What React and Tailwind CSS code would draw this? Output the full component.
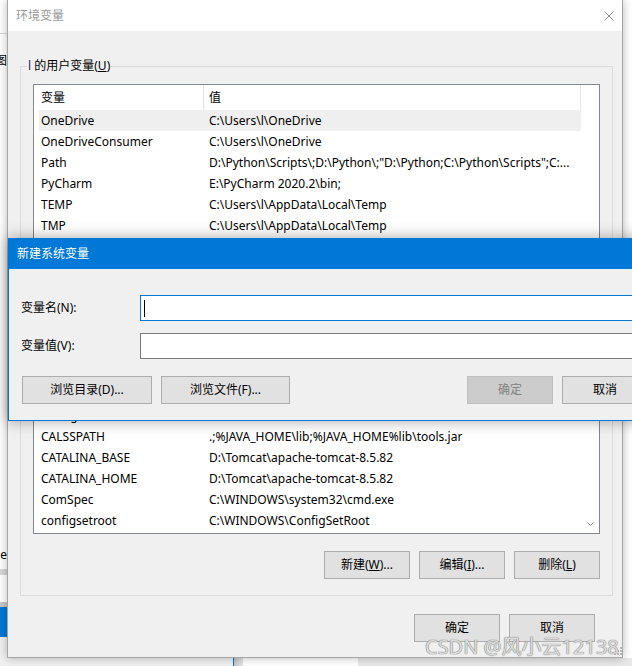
import React from 'react'

const userVars = [
  ['OneDrive', 'C:\\Users\\l\\OneDrive'],
  ['OneDriveConsumer', 'C:\\Users\\l\\OneDrive'],
  ['Path', 'D:\\Python\\Scripts\\;D:\\Python\\;"D:\\Python;C:\\Python\\Scripts";C:...'],
  ['PyCharm', 'E:\\PyCharm 2020.2\\bin;'],
  ['TEMP', 'C:\\Users\\l\\AppData\\Local\\Temp'],
  ['TMP', 'C:\\Users\\l\\AppData\\Local\\Temp'],
]

// first row sits fully under the dialog, so it is left blank
const systemVars = [
  ['', ''],
  ['asl.log', 'Destination=file'],
  ['CALSSPATH', '.;%JAVA_HOME\\lib;%JAVA_HOME%lib\\tools.jar'],
  ['CATALINA_BASE', 'D:\\Tomcat\\apache-tomcat-8.5.82'],
  ['CATALINA_HOME', 'D:\\Tomcat\\apache-tomcat-8.5.82'],
  ['ComSpec', 'C:\\WINDOWS\\system32\\cmd.exe'],
  ['configsetroot', 'C:\\WINDOWS\\ConfigSetRoot'],
  ['DriverData', 'C:\\Windows\\System32\\Drivers\\DriverData'],
]

const Btn = ({ children, className = '', disabled }) => (
  <button
    type="button"
    className={`h-[28px] shrink-0 flex items-center justify-center border leading-none ${
      disabled ? 'bg-[#cccccc] border-[#bfbfbf] text-[#838383]' : 'bg-[#e1e1e1] border-[#adadad] text-black'
    } ${className}`}
  >
    {children}
  </button>
)

// list view with a header, like the Win10 ListView
const VarList = ({ rows, height, selected = -1, arrow }) => (
  <div className={`${height} flex border border-[#828790] bg-white overflow-hidden`}>
    <div className="ml-[5px] w-[542px] shrink-0">
      <div className="flex h-[25px] leading-[25px]">
        <div className="w-[165px] shrink-0 border-r border-[#e5e5e5] pl-[2px]">变量</div>
        <div className="flex-1 border-r border-[#e5e5e5] pl-[5px]">值</div>
      </div>
      {rows.map(([name, value], i) => (
        <div key={i} className={`flex h-[21px] leading-[21px] ${i === selected ? 'bg-[#efefef]' : ''}`}>
          <div className="w-[165px] shrink-0 pl-[2px] whitespace-nowrap overflow-hidden">{name}</div>
          <div className="flex-1 min-w-0 pl-[5px] whitespace-nowrap overflow-hidden">{value}</div>
        </div>
      ))}
    </div>
    <div className="flex-1 flex flex-col justify-end items-center pb-[7px]">
      {arrow && (
        <svg width="7" height="4" viewBox="0 0 7 4">
          <path d="M0.5 0.5 L3.5 3.5 L6.5 0.5" stroke="#8a8a8a" fill="none" />
        </svg>
      )}
    </div>
  </div>
)

const GroupBox = ({ label, children, className = '' }) => (
  <div className={`relative border border-[#dcdcdc] ${className}`}>
    {label && (
      <span className="absolute -top-[9px] left-[6px] bg-[#f0f0f0] px-[1px] leading-[16px] whitespace-nowrap">{label}</span>
    )}
    {children}
  </div>
)

const Backdrop = () => (
  <>
    <div className="absolute left-0 top-0 w-[7px] h-[666px] flex flex-col bg-white">
      <div className="h-[34px] shrink-0 border-b border-[#d9d9d9]" />
      <div className="h-[20px] shrink-0" />
      <div className="h-[14px] shrink-0 w-[7px] overflow-hidden flex justify-end leading-[14px]">
        <span className="shrink-0">图</span>
      </div>
      <div className="flex-1" />
      <div className="h-[14px] shrink-0 w-[7px] overflow-hidden flex justify-end leading-[14px]">
        <span className="shrink-0">e</span>
      </div>
      <div className="h-[7px] shrink-0" />
      <div className="h-[6px] shrink-0 bg-[#d6d6d6]" />
      <div className="h-[27px] shrink-0" />
      <div className="h-[5px] shrink-0 bg-[#c8c8c8]" />
      <div className="h-[30px] shrink-0 bg-[#0078d7]" />
      <div className="h-[29px] shrink-0 bg-[#f0f0f0]" />
    </div>
    <div className="absolute left-0 bottom-0 w-[632px] h-[8px] flex">
      <div className="w-[233px] bg-[#f0f0f0]" />
      <div className="w-[1px] bg-[#0078d7]" />
      <div className="w-[9px] bg-gradient-to-r from-[#c4c4c4] to-[#e6e6e6]" />
      <div className="w-[115px] bg-white" />
      <div className="flex-1 bg-[#e8e8e8]" />
    </div>
  </>
)

const EnvWindow = () => (
  <div className="absolute left-[7px] top-0 w-[616px] h-[658px] flex flex-col bg-[#f0f0f0] border-x border-b border-[#a6a6a6] shadow-[0_0_9px_rgba(0,0,0,0.28)]">
    <div className="h-[31px] shrink-0 flex items-center justify-between bg-white pl-[8px] pr-[8px] text-[#999999]">
      <span>环境变量</span>
      <svg width="10" height="10" viewBox="0 0 10 10">
        <path d="M0.5 0.5 L9.5 9.5 M9.5 0.5 L0.5 9.5" stroke="#8f8f8f" strokeWidth="1" fill="none" />
      </svg>
    </div>
    <div className="pl-[12px]">
      <GroupBox
        className="mt-[35px] w-[593px] pt-[17px] px-[12px] pb-[16px]"
        label={
          <>
            <span className="text-[#3a1c4a]">l</span> 的用户变量(<u>U</u>)
          </>
        }
      >
        <VarList rows={userVars} height="h-[179px]" selected={0} />
        {/* button row covered by the dialog */}
        <div className="mt-[17px] h-[28px]" />
      </GroupBox>
      <GroupBox className="mt-[15px] w-[593px] pt-[17px] px-[12px] pb-[16px]">
        <VarList rows={systemVars} height="h-[176px]" arrow />
        <div className="mt-[17px] flex justify-end gap-[9px]">
          <Btn className="w-[86px]">
            新建(<u>W</u>)...
          </Btn>
          <Btn className="w-[86px]">
            编辑(<u>I</u>)...
          </Btn>
          <Btn className="w-[86px]">
            删除(<u>L</u>)
          </Btn>
        </div>
      </GroupBox>
      <div className="mt-[18px] flex justify-end gap-[9px] pr-[27px]">
        <Btn className="w-[86px]">确定</Btn>
        <Btn className="w-[86px]">取消</Btn>
      </div>
    </div>
  </div>
)

const NewVarDialog = () => (
  <div className="absolute left-[8px] top-[238px] w-[654px] h-[183px] flex flex-col bg-[#f0f0f0] border border-[#0078d7] shadow-[0_0_14px_rgba(0,0,0,0.35)]">
    <div className="h-[30px] shrink-0 flex items-center bg-[#0078d7] pl-[8px] text-white">新建系统变量</div>
    <div className="pl-[12px] pr-[13px] pt-[26px]">
      <div className="flex items-center h-[26px]">
        <span className="w-[119px] shrink-0">变量名(N):</span>
        <div className="w-[508px] h-[26px] flex items-center bg-white border border-[#0078d7]">
          <span className="ml-[3px] w-[1px] h-[17px] bg-black" />
        </div>
      </div>
      <div className="mt-[12px] flex items-center h-[26px]">
        <span className="w-[119px] shrink-0">变量值(V):</span>
        <div className="w-[508px] h-[26px] bg-white border border-[#7a7a7a]" />
      </div>
      <div className="mt-[17px] flex justify-between">
        <div className="ml-[1px] flex gap-[9px]">
          <Btn className="w-[130px]">浏览目录(D)...</Btn>
          <Btn className="w-[129px]">浏览文件(F)...</Btn>
        </div>
        <div className="flex gap-[9px]">
          <Btn className="w-[86px]" disabled>
            确定
          </Btn>
          <Btn className="w-[86px]">取消</Btn>
        </div>
      </div>
    </div>
  </div>
)

export default function App() {
  return (
    <div className="relative w-[632px] h-[666px] overflow-hidden bg-white text-[12px] text-black font-['Noto_Sans','Noto_Sans_CJK_SC',sans-serif]">
      <Backdrop />
      <EnvWindow />
      <NewVarDialog />
      {/* resize grip */}
      <svg className="absolute left-[614px] top-[647px]" width="8" height="8" viewBox="0 0 8 8">
        {[
          [6, 0],
          [6, 3],
          [3, 3],
          [6, 6],
          [3, 6],
          [0, 6],
        ].map(([x, y]) => (
          <rect key={`${x}-${y}`} x={x} y={y} width="2" height="2" fill="#b8b8b8" />
        ))}
      </svg>
      {/* CSDN watermark */}
      <div className="absolute left-[425px] top-[636px] text-[20px] leading-[22px] whitespace-nowrap text-[#dadada] [text-shadow:0_0_1px_#7f7f7f,0_0_1px_#7f7f7f]">
        CSDN @风小云12138
      </div>
    </div>
  )
}
